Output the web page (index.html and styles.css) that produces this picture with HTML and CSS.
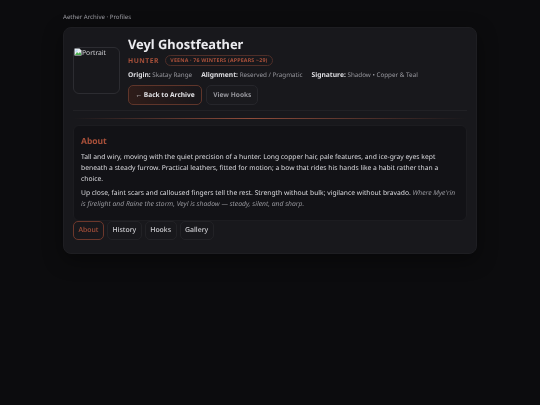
FILE: index.html
```html
<!DOCTYPE html>
<html lang="en">
<head>
<meta charset="utf-8">
<title>Veyl Ghostfeather</title>
<link rel="stylesheet" href="styles.css">
</head>
<body>
<main class="page">
  <div class="crumb">Aether Archive · Profiles</div>
  <section class="card">
    <header class="hero">
      <div class="portrait">
        <svg class="broken" width="8" height="8" viewBox="0 0 8 8"><path d="M.5.5h5l2 2v5h-7z" fill="#e8eef2"/><path d="M1 7l2-3 1.500 1.500L6 4l1 1.500V7z" fill="#4caf50"/><path d="M1 3.500c.5-1.500 2-2 3-1.500L2.500 4z" fill="#b9d7f5"/></svg><span class="alt">Portrait</span>
      </div>
      <div class="info">
        <h1 class="name">Veyl Ghostfeather</h1>
        <div class="tags">
          <span class="role">HUNTER</span>
          <span class="pill">VEENA · 76 WINTERS (APPEARS ~29)</span>
        </div>
        <div class="facts">
          <span><b>Origin:</b> Skatay Range</span>
          <span><b>Alignment:</b> Reserved / Pragmatic</span>
          <span><b>Signature:</b> Shadow • Copper &amp; Teal</span>
        </div>
        <div class="actions">
          <a class="btn btn-primary">← Back to Archive</a>
          <a class="btn">View Hooks</a>
        </div>
      </div>
    </header>
    <div class="rule"></div>
    <div class="accent"></div>
    <article class="panel">
      <h2 class="panel-title">About</h2>
      <p>Tall and wiry, moving with the quiet precision of a hunter. Long copper hair, pale features, and ice-gray eyes kept beneath a steady furrow. Practical leathers, fitted for motion; a bow that rides his hands like a habit rather than a choice.</p>
      <p>Up close, faint scars and calloused fingers tell the rest. Strength without bulk; vigilance without bravado. <em>Where Mye'rin is firelight and Raine the storm, Veyl is shadow — steady, silent, and sharp.</em></p>
    </article>
    <nav class="tabs">
      <a class="tab active">About</a>
      <a class="tab">History</a>
      <a class="tab">Hooks</a>
      <a class="tab">Gallery</a>
    </nav>
  </section>
</main>
</body>
</html>
```
FILE: styles.css
```css
* { box-sizing: border-box; }
html, body { margin: 0; height: 100%; }
body {
  background: #0c0c0e;
  color: #d8d8dc;
  font-family: "Noto Sans", sans-serif;
  font-size: 6.75px;
  text-rendering: geometricPrecision;
}
.page { width: 414px; margin: 0 auto; padding-top: 12px; filter: blur(.25px); }
.crumb { font-size: 6.1px; line-height: 9px; color: #9a9aa0; margin-bottom: 6px; }
.card {
  background: #18181c;
  border: 1px solid #1e1e22;
  border-radius: 8px;
  padding: 9px;
  box-shadow: 0 6px 20px rgba(0,0,0,.4);
  height: 227px;
}
.hero { display: flex; gap: 8px; height: 73px; }
.portrait {
  width: 47px; height: 47px; margin-top: 10px;
  border: 1px solid #2c2c31;
  border-radius: 6px;
  display: flex; align-items: flex-start;
  flex: none;
  font-size: 6.75px; line-height: 9px; color: #cfcfd3;
}
.broken { flex: none; }
.info { flex: 1; min-width: 0; }
.name { margin: 0; font-size: 12.85px; line-height: 15px; font-weight: 700; color: #ececf0; }
.tags { display: flex; align-items: center; gap: 6px; margin-top: 2px; height: 12px; }
.role { font-size: 6.75px; font-weight: 700; letter-spacing: .5px; color: #a8503a; }
.pill {
  font-size: 5.25px; font-weight: 700; letter-spacing: .2px; color: #a8503a;
  border: 1px solid #4e2e28; border-radius: 6px; padding: 0 4.500px; line-height: 9px;
}
.facts { display: flex; gap: 9px; margin-top: 4px; font-size: 6.3px; line-height: 10px; color: #96969c; }
.facts b { font-size: 6.7px; font-weight: 700; color: #dcdce0; }
.actions { display: flex; gap: 4px; margin-top: 5px; }
.btn {
  display: block; font-size: 6.6px; font-weight: 700; line-height: 10px; color: #96969c;
  padding: 4px 6px; border: 1px solid #26262b; border-radius: 5px; background: #1a1a1e;
}
.btn-primary {
  color: #e0e0e4; border-color: #5f352a; padding: 4px 6.500px;
  background: linear-gradient(90deg, #2e1c19, #18171b);
}
.rule { height: 1px; background: #212125; }
.accent {
  height: 1px; margin-top: 6.500px;
  background: linear-gradient(90deg, transparent, #8f4c3a 45%, transparent);
}
.panel {
  background: #121216;
  border: 1px solid #1c1c20;
  border-radius: 6px;
  margin-top: 6.500px;
  padding: 10px 7px 6px;
  height: 96px;
}
.panel-title { margin: 0 0 4px; font-size: 8.5px; line-height: 12px; font-weight: 700; color: #a8503a; }
.panel p { margin: 0 0 3.700px; line-height: 10.8px; color: #dadade; font-size: 6.75px; }
.panel em { color: #96969c; }
.tabs { display: flex; gap: 3px; }
.tab {
  font-size: 6.9px; line-height: 10px; font-weight: 500; color: #d0d0d4; padding: 3.500px 4.500px;
  border: 1px solid #222226; border-radius: 5px;
}
.tab.active { color: #a8503a; border-color: #6c372b; padding: 3.500px 4.500px; }
```
